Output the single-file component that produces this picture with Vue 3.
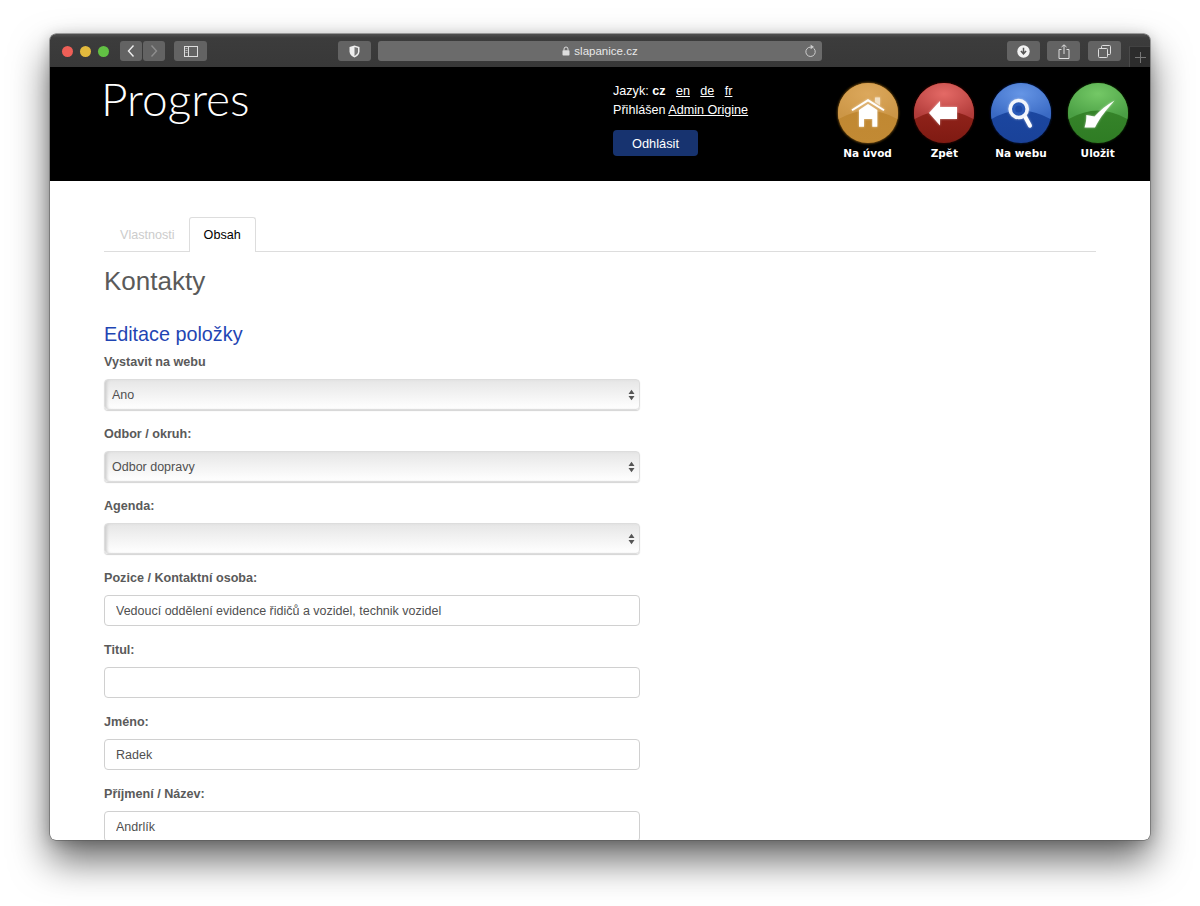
<script setup>
const orbs = [
  { key: 'home', label: 'Na úvod', top1: '#dca85c', top2: '#cc9646', low1: '#bf8630', low2: '#c28a34', glow: '#8a5c14' },
  { key: 'back', label: 'Zpět', top1: '#e46a66', top2: '#b23c3a', low1: '#a12b22', low2: '#7f1a12', glow: '#3a0c08' },
  { key: 'web', label: 'Na webu', top1: '#6595e5', top2: '#3a6ac4', low1: '#1b4aa6', low2: '#1a4299', glow: '#0c1f48' },
  { key: 'save', label: 'Uložit', top1: '#74c866', top2: '#4a9f44', low1: '#3a8a2e', low2: '#2f7c24', glow: '#13300c' }
]

const fields = [
  { label: 'Vystavit na webu', type: 'select', value: 'Ano' },
  { label: 'Odbor / okruh:', type: 'select', value: 'Odbor dopravy' },
  { label: 'Agenda:', type: 'select', value: '' },
  { label: 'Pozice / Kontaktní osoba:', type: 'input', value: 'Vedoucí oddělení evidence řidičů a vozidel, technik vozidel' },
  { label: 'Titul:', type: 'input', value: '' },
  { label: 'Jméno:', type: 'input', value: 'Radek' },
  { label: 'Příjmení / Název:', type: 'input', value: 'Andrlík' }
]
</script>

<template>
  <div class="page">
    <div class="window">
      <div class="titlebar">
        <div class="lights">
          <span class="light red"></span>
          <span class="light yellow"></span>
          <span class="light green"></span>
        </div>
        <div class="navgroup">
          <span class="tbtn nav">
            <svg width="10" height="14" viewBox="0 0 10 14"><path d="M7.5 1.5 2.5 7l5 5.5" fill="none" stroke="#eee" stroke-width="1.4"/></svg>
          </span>
          <span class="tbtn nav">
            <svg width="10" height="14" viewBox="0 0 10 14"><path d="M2.5 1.5 7.5 7l-5 5.5" fill="none" stroke="#8e8e8e" stroke-width="1.4"/></svg>
          </span>
        </div>
        <span class="tbtn wide sidebar">
          <svg width="14" height="11" viewBox="0 0 14 11"><rect x=".5" y=".5" width="13" height="10" fill="none" stroke="#ddd"/><path d="M4.5 .5v10" stroke="#ddd"/><path d="M1.5 2.5h2M1.5 4.5h2M1.5 6.5h2" stroke="#ccc" stroke-width=".8"/></svg>
        </span>
        <span class="tbtn wide shield">
          <svg width="11" height="13" viewBox="0 0 11 13"><path d="M5.5 .5 10.5 2v4.5c0 3-2.4 5-5 6-2.6-1-5-3-5-6V2z" fill="#eee"/><path d="M5.5 2 9 3v3.5c0 2-1.6 3.5-3.5 4.4z" fill="#777"/></svg>
        </span>
        <div class="urlbar">
          <span class="url">
            <svg width="8" height="10" viewBox="0 0 8 10"><path d="M2 4.5V3a2 2 0 0 1 4 0v1.5" fill="none" stroke="#ddd" stroke-width="1"/><rect x=".5" y="4.2" width="7" height="5.3" rx=".8" fill="#ddd"/></svg>
            slapanice.cz
          </span>
          <svg class="reload" width="12" height="14" viewBox="0 0 12 14"><path d="M8.800 4.400a4.700 4.700 0 1 1-3-1.300" fill="none" stroke="#ccc" stroke-width="1"/><path d="M5.600 .6 9 3 5.600 5.200z" fill="#ccc"/></svg>
        </div>
        <span class="tbtn wide download">
          <svg width="13" height="13" viewBox="0 0 13 13"><circle cx="6.5" cy="6.5" r="6.2" fill="#f2f2f2"/><path d="M6.5 2.8v5M3.9 6l2.6 2.8L9.1 6" fill="none" stroke="#555" stroke-width="1.5"/></svg>
        </span>
        <span class="tbtn wide share">
          <svg width="12" height="15" viewBox="0 0 12 15"><path d="M3.5 5.5H1v9h10v-9H8.500" fill="none" stroke="#ddd"/><path d="M6 10V1M3.500 3 6 .8 8.500 3" fill="none" stroke="#ddd"/></svg>
        </span>
        <span class="tbtn wide tabsbtn">
          <svg width="13" height="13" viewBox="0 0 13 13"><rect x=".5" y="3.500" width="9" height="9" rx="1" fill="none" stroke="#ddd"/><path d="M3.500 3.500V1.500a1 1 0 0 1 1-1h7a1 1 0 0 1 1 1v7a1 1 0 0 1-1 1h-2" fill="none" stroke="#ddd"/></svg>
        </span>
        <span class="newtab">
          <svg width="11" height="11" viewBox="0 0 11 11"><path d="M5.500 0v11M0 5.500h11" stroke="#777"/></svg>
        </span>
      </div>

      <header class="header">
        <div class="logo">Progres</div>
        <div class="account">
          <div class="line">Jazyk: <b class="cur">cz</b><a class="lang">en</a><a class="lang">de</a><a class="lang">fr</a></div>
          <div class="line">Přihlášen <a>Admin Origine</a></div>
          <button class="logout" type="button">Odhlásit</button>
        </div>
        <nav class="orbs">
          <div v-for="o in orbs" :key="o.key" class="orb">
            <svg width="66" height="66" viewBox="0 0 66 66">
              <defs>
                <linearGradient :id="'low-' + o.key" x1="0" y1="0" x2="0" y2="1">
                  <stop offset="0" :stop-color="o.low1"/>
                  <stop offset="1" :stop-color="o.low2"/>
                </linearGradient>
                <radialGradient :id="'top-' + o.key" cx=".5" cy=".3" r=".72">
                  <stop offset="0" :stop-color="o.top1"/>
                  <stop offset="1" :stop-color="o.top2"/>
                </radialGradient>
                <filter :id="'glow-' + o.key" x="-20%" y="-20%" width="140%" height="140%">
                  <feGaussianBlur stdDeviation="1"/>
                </filter>
                <filter :id="'soft-' + o.key" x="-30%" y="-30%" width="160%" height="160%">
                  <feDropShadow dx="0" dy="0" stdDeviation="1" flood-color="#fff" flood-opacity=".55"/>
                </filter>
              </defs>
              <circle cx="33" cy="33" r="30.500" :fill="o.glow" :filter="'url(#glow-' + o.key + ')'"/>
              <circle cx="33" cy="33" r="30" :fill="'url(#low-' + o.key + ')'"/>
              <path d="M3.600 39A30 30 0 1 1 62.400 39Q47 30.500 33 30.500T3.600 39Z" :fill="'url(#top-' + o.key + ')'"/>

              <g :filter="'url(#soft-' + o.key + ')'">
                <g v-if="o.key === 'home'" fill="#fff">
                  <path d="M40 17.500H45V25.500L40 22Z" fill="#f3e2c6"/>
                  <path d="M16.500 29.500 33 19 49.500 29.500 48.500 31 33 21.500 17.500 31Z"/>
                  <path d="M33 24 42.300 30V46.700H37.300V39H29V46.700H24V30Z"/>
                </g>
                <path v-else-if="o.key === 'back'" d="M18 33 29 21V27H46V39H29V45.500Z" fill="#fff"/>
                <g v-else-if="o.key === 'web'">
                  <path d="M37 36.500 42 45.700" stroke="#fff" stroke-width="4" stroke-linecap="round"/>
                  <circle cx="30.700" cy="29" r="8.500" fill="#2a5ab8" stroke="#f2f5fb" stroke-width="3.600"/>
                  <circle cx="30.700" cy="29" r="3.500" fill="#1e4aa8"/>
                </g>
                <path v-else d="M21.300 35 29.500 36.500C35 30 42 25 49.500 20.500 43 28 35 37 30 47.500H19.500C21 43 21.500 39 21.300 35Z" fill="#fff"/>
              </g>
            </svg>
            <span class="orb-label">{{ o.label }}</span>
          </div>
        </nav>
      </header>

      <main class="content">
        <div class="tabs">
          <span class="tab">Vlastnosti</span>
          <span class="tab active">Obsah</span>
        </div>
        <h1 class="title">Kontakty</h1>
        <h2 class="subtitle">Editace položky</h2>
        <form class="form">
          <div v-for="f in fields" :key="f.label" class="field">
            <label class="label">{{ f.label }}</label>
            <div v-if="f.type === 'select'" class="select">
              <span>{{ f.value }}</span>
              <svg width="7" height="12" viewBox="0 0 7 12"><path d="M3.500 .8 6.500 5H.5zM3.500 11.200 .5 7h6z" fill="#555"/></svg>
            </div>
            <input v-else class="input" type="text" :value="f.value" />
          </div>
        </form>
      </main>
    </div>
  </div>
</template>

<style>
html, body { margin: 0; background: #fff; }
</style>

<style scoped>
.page {
  width: 1200px;
  height: 906px;
  box-sizing: border-box;
  padding: 34px 50px 66px;
  background: #fff;
  overflow: hidden;
  font-family: "Liberation Sans", Arial, sans-serif;
}
.window {
  height: 806px;
  border-radius: 6px;
  overflow: hidden;
  background: #fff;
  box-shadow: 0 0 0 .5px #555, 0 20px 38px rgba(0, 0, 0, .6), 0 2px 14px rgba(0, 0, 0, .2);
  display: flex;
  flex-direction: column;
}
.titlebar {
  height: 33px;
  flex: none;
  box-sizing: border-box;
  display: flex;
  align-items: flex-start;
  padding-top: 7px;
  background: linear-gradient(#505050, #3c3c3c 12%, #383838);
  position: relative;
}
.lights {
  display: flex;
  gap: 7px;
  margin: 5px 0 0 12px;
}
.light {
  width: 11px;
  height: 11px;
  border-radius: 50%;
}
.red { background: #ee5f57; }
.yellow { background: #e2b93d; }
.green { background: #62c144; }
.navgroup {
  display: flex;
  gap: 1px;
  margin-left: 11px;
}
.tbtn {
  height: 20px;
  border-radius: 3px;
  background: #636363;
  display: flex;
  align-items: center;
  justify-content: center;
}
.nav { width: 22px; }
.wide { width: 33px; }
.sidebar { margin-left: 9px; }
.shield { margin-left: 131px; }
.urlbar {
  width: 444px;
  height: 20px;
  margin: 0 185px 0 7px;
  border-radius: 3px;
  background: #6b6b6b;
  display: flex;
  align-items: center;
  justify-content: center;
  position: relative;
  color: #e8e8e8;
  font-size: 11.500px;
}
.url { display: flex; align-items: center; gap: 4px; }
.reload { position: absolute; right: 5px; top: 3px; }
.share { margin-left: 7px; }
.tabsbtn { margin-left: 8px; }
.newtab {
  position: absolute;
  right: 0;
  bottom: 0;
  width: 21px;
  height: 21px;
  box-sizing: border-box;
  background: #2c2c2c;
  border-left: 1px solid #4a4a4a;
  border-top: 1px solid #424242;
  display: flex;
  align-items: center;
  justify-content: center;
}

.header {
  height: 114px;
  flex: none;
  background: #000;
  color: #fff;
  display: grid;
  grid-template-columns: 511px 1fr auto;
  padding-left: 51px;
  padding-right: 14px;
  box-sizing: border-box;
  font-size: 12.600px;
}
.logo {
  font-family: Lato, sans-serif;
  font-weight: 300;
  font-size: 46px;
  line-height: 63px;
  margin-left: 0;
}
.account { padding: 15px 0 0 1px; }
.line { line-height: 18.500px; white-space: nowrap; }
.account a { text-decoration: underline; }
.lang { margin-left: 10.400px; }
.logout {
  display: block;
  margin-top: 11px;
  width: 85px;
  height: 26px;
  border: 0;
  border-radius: 4px;
  background: #17336f;
  color: #fff;
  font: 12.800px "Liberation Sans", Arial, sans-serif;
  padding: 0;
}
.orbs { display: flex; }
.orb {
  width: 76.700px;
  display: flex;
  flex-direction: column;
  align-items: center;
  padding-top: 13px;
}
.orb svg { display: block; }
.orb-label {
  font-family: "DejaVu Sans", sans-serif;
  font-weight: 700;
  font-size: 10.500px;
  line-height: 14px;
}

.content {
  padding: 36px 54px 0;
  color: #5a5a5a;
}
.tabs {
  display: flex;
  height: 35px;
  box-sizing: border-box;
  border-bottom: 1px solid #ddd;
  font-size: 12.600px;
}
.tab {
  height: 34px;
  box-sizing: border-box;
  padding: 0 13px 0 15px;
  line-height: 34px;
  color: #ccc;
  border: 1px solid transparent;
  border-bottom: 0;
  border-radius: 3px 3px 0 0;
}
.tab.active {
  color: #000;
  background: #fff;
  border-color: #ddd;
  height: 35px;
  padding: 0 14px;
}
.title {
  margin: 14px 0 0;
  font-size: 26px;
  font-weight: 400;
  line-height: 30px;
}
.subtitle {
  margin: 24px 0 0;
  font-size: 19.800px;
  font-weight: 400;
  line-height: 28px;
  color: #1f45b3;
}
.form {
  margin-top: 6px;
  width: 536px;
  display: flex;
  flex-direction: column;
  gap: 16px;
}
.field { display: flex; flex-direction: column; gap: 9px; }
.label {
  font-size: 12.600px;
  font-weight: 700;
  line-height: 16px;
}
.select {
  height: 31px;
  box-sizing: border-box;
  border: 1px solid #ddd;
  border-radius: 4px;
  background: linear-gradient(#e6e6e6, #f4f4f4 55%, #fff);
  box-shadow: inset 3px 0 3px -1px #cfcfcf, 0 1px 1px #d4d4d4;
  display: flex;
  align-items: center;
  justify-content: space-between;
  padding: 0 4px 0 7px;
  font-size: 12.500px;
  color: #505050;
}
.input {
  height: 31px;
  box-sizing: border-box;
  width: 100%;
  margin: 0;
  border: 1px solid #d0d0d0;
  border-radius: 4px;
  background: #fff;
  padding: 0 11px;
  font: 12.500px "Liberation Sans", Arial, sans-serif;
  color: #505050;
  outline: none;
}
</style>
